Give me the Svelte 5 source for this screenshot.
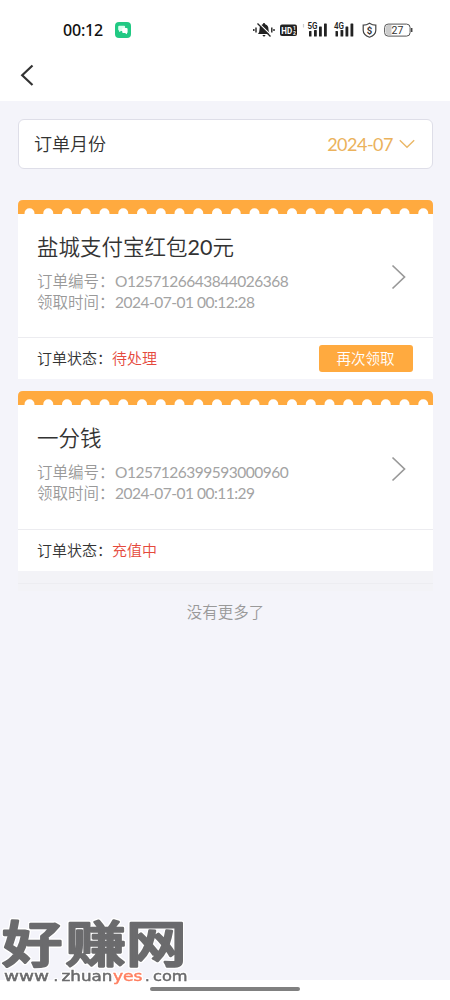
<script>
  const orders = [
    { title: ['盐城支付宝红包', '20', '元'], id: 'O1257126643844026368', time: '2024-07-01 00:12:28', status: '待处理', retry: true },
    { title: ['一分钱'], id: 'O1257126399593000960', time: '2024-07-01 00:11:29', status: '充值中', retry: false }
  ];
  const holes = Array.from({ length: 22 }, (_, i) => 11.5 + i * 18.75);
</script>

<div class="screen">
  <header>
    <div class="status">
      <span class="clock">00:12</span>
      <svg class="chat" width="16" height="16" viewBox="0 0 16 16">
        <rect width="16" height="16" rx="4" fill="#20c983" />
        <path d="M4.300 3.700h4.800q1 0 1 1v3.200q0 1-1 1H6.200L4 10V8.500q-.8-.2-.8-1V4.700q0-1 1.100-1z" fill="#d9ffef" />
        <path d="M8 6h3.400q1.200 0 1.200 1v3q0 .8-.6 1v1.300l-2-1.200H8.200q-1 0-1-1V7q0-1 .8-1z" fill="#fff" />
      </svg>
      <svg class="signals" width="162" height="20" viewBox="0 0 162 20">
        <g fill="#222">
          <path d="M5 14q1.500-1.500 1.500-4.500 0-4.500 3.300-5.300Q10 3 11 3t1.200 1.200q3.300.8 3.300 5.300 0 3 1.500 4.500zM9.500 15h3q-.4 1.500-1.500 1.500T9.500 15z" />
          <path d="M5.500 3 19 16" stroke="#fff" stroke-width="1.200" />
          <path d="M4.500 3.500 17.500 16.500M3 7.500v5M.8 9v2M18.800 7.500v5M21 9v2" stroke="#222" stroke-width="1.400" />
          <rect x="27" y="4.500" width="17" height="11.500" rx="2" />
          <text x="28.300" y="13.800" font-size="9" font-weight="700" textLength="10.800" lengthAdjust="spacingAndGlyphs" fill="#fff">HD</text>
          <text x="40" y="9.700" font-size="5" font-weight="700" fill="#fff">1</text>
          <text x="40" y="14.700" font-size="5" font-weight="700" fill="#fff">2</text>
          <text x="54.500" y="8.700" font-size="8.500" font-weight="600" textLength="10" lengthAdjust="spacingAndGlyphs">5G</text>
          <text x="81" y="8.700" font-size="8.500" font-weight="600" textLength="10" lengthAdjust="spacingAndGlyphs">4G</text>
          <path d="M50.500 4v3.500" stroke="#ccc" stroke-width="1.200" />
          {#each [56, 82.500] as x}
            <rect {x} y="11" width="2.500" height="5.500" rx=".6" />
            <rect x={x + 5} y="10" width="2.800" height="6.500" rx=".6" />
            <rect x={x + 10} y="6.500" width="2.800" height="10" rx=".6" />
            <rect x={x + 15} y="3.500" width="2.800" height="13" rx=".6" />
          {/each}
        </g>
        <path d="M116.500 3.200q3 2 6.300 2v5q0 4.600-6.300 7-6.300-2.400-6.300-7v-5q3.300 0 6.300-2z" fill="none" stroke="#444" stroke-width="1.200" />
        <text x="116.500" y="13.500" text-anchor="middle" font-size="9.500" font-weight="700" fill="#333">$</text>
        <rect x="131.600" y="4.100" width="25.500" height="12" rx="3.500" fill="#fff" stroke="#555" />
        <path d="M135 5h3.500v10H135q-2.400 0-2.400-2.500v-5Q132.600 5 135 5z" fill="#ccc" />
        <path d="M158.700 8v4" stroke="#444" stroke-width="1.500" />
        <text x="144.500" y="13.900" text-anchor="middle" font-size="10.500" fill="#333">27</text>
      </svg>
    </div>
    <svg class="back" width="16" height="24" viewBox="0 0 16 24"><path d="M14.500 2.500 4.200 12.300l10.300 9.700" fill="none" stroke="#333" stroke-width="2.200" /></svg>
  </header>

  <main>
    <div class="month">
      <span>订单月份</span>
      <span class="value"><span>2024-07</span>
        <svg width="16" height="10" viewBox="0 0 16 10"><path d="m.8 1.200 7.200 7 7.200-7" fill="none" stroke="#eab766" stroke-width="1.400" /></svg>
      </span>
    </div>

    {#each orders as order}
      <article>
        <svg class="edge" width="415" height="14" viewBox="0 0 415 14">
          <path d="M0 14V5q0-5 5-5h405q5 0 5 5v9z" fill="#ffaa3f" />
          {#each holes as x}<circle cx={x} cy="13.300" r="5" fill="#fff" />{/each}
        </svg>
        <div class="body">
          <div class="details">
            <h2>{#each order.title as part, i}<span class:num={i === 1}>{part}</span>{/each}</h2>
            <p><span>订单编号：</span><b>{order.id}</b></p>
            <p><span>领取时间：</span><b>{order.time}</b></p>
          </div>
          <svg class="next" width="16" height="26" viewBox="0 0 16 26"><path d="m1.500 1.500 12 11.500-12 11.500" fill="none" stroke="#999" stroke-width="1.700" /></svg>
        </div>
        <footer>
          <span>订单状态：</span><em>{order.status}</em>
          {#if order.retry}<button>再次领取</button>{/if}
        </footer>
      </article>
    {/each}
    <div class="end"></div>
    <p class="more">没有更多了</p>
  </main>
  <div class="nav"><i></i></div>

  <svg class="mark" width="200" height="80" viewBox="0 0 200 80">
    <g transform="translate(0 52.300) scale(1.140 .92)">
      <text class="han" x="1.800 57.500 110.500" y="0" font-size="53">好赚网</text>
    </g>
    <g class="url" font-size="14.500">
      <text x="4" y="71" textLength="45" lengthAdjust="spacingAndGlyphs">www</text>
      <text x="53.500" y="71">.</text>
      <text x="61.500" y="71" textLength="51" lengthAdjust="spacingAndGlyphs">zhuan</text>
      <text class="accent" x="113" y="71" textLength="29.500" lengthAdjust="spacingAndGlyphs">yes</text>
      <text x="145" y="71">.</text>
      <text x="153" y="71" textLength="34.500" lengthAdjust="spacingAndGlyphs">com</text>
    </g>
  </svg>
</div>

<style>
  :global(body) { margin: 0; }
  .screen { position: relative; display: flex; flex-direction: column; width: 450px; height: 1000px; overflow: hidden; background: #f4f4fa; color: #333; font-family: Lato, "Noto Sans CJK SC", sans-serif; font-weight: 350; }
  header { height: 101px; flex: none; background: #fff; }
  .status { display: flex; height: 60px; align-items: center; padding-left: 63px; }
  .clock { width: 52px; color: #111; font: 500 16px/20px "Noto Sans", sans-serif; letter-spacing: -.2px; }
  .signals { margin-left: 122px; font-family: Roboto, sans-serif; font-weight: 400; }
  .back { display: block; margin: 3px 0 0 18px; }
  main { flex: 1; padding: 18px 17px 0 18px; }
  .month { box-sizing: border-box; display: flex; height: 50px; align-items: center; justify-content: space-between; padding: 0 17px 2px 15px; margin-bottom: 31px; border: 1px solid #dedee8; border-radius: 6px; background: #fff; font-size: 18px; }
  .value { display: flex; align-items: center; gap: 6px; color: #ebb25c; font-weight: 400; letter-spacing: -.5px; }
  .value span { padding-top: 1px; }
  .value svg { margin-top: 2px; }
  article { height: 179px; margin: 0 0 11.500px -.5px; width: 415px; background: linear-gradient(#f4f4fa 7px, #fff 7px); }
  article + article { height: 180px; }
  .edge { display: block; }
  .body { box-sizing: border-box; display: flex; height: 123px; justify-content: space-between; padding: 18px 26px 0 19.500px; }
  article + article .body { height: 124.500px; }
  h2 { margin: 0 0 9px; font-size: 21.500px; line-height: 30px; font-weight: 350; }
  .num { font-weight: 400; }
  .details p { display: flex; height: 21px; margin: 0; line-height: 21px; color: #999; font-size: 15.500px; }
  .details p span { width: 78px; white-space: nowrap; }
  .details b { color: #a3a3a3; font-weight: 400; font-size: 15.500px; letter-spacing: -.5px; }
  .next { margin-top: 32px; }
  article + article .next { margin-top: 33px; }
  footer { box-sizing: border-box; display: flex; height: 42px; align-items: center; padding: 0 20px 2px 19.500px; border-top: 1px solid #ececf0; font-size: 15px; }
  footer span { width: 75px; }
  em { font-style: normal; color: #e5493c; }
  button { width: 94px; height: 27px; padding: 0 0 1px; margin: 2px 0 0 auto; border: 0; border-radius: 3px; background: #ffaa3f; color: #fff; font: 350 14.500px/24px "Noto Sans CJK SC", sans-serif; }
  .end { height: 20px; margin-top: -11.500px; background: linear-gradient(#f3f3f7 12px, #ededf1 12px, #ededf1 13px, #f3f3f7 13px); }
  .more { margin: 9px 0 0; text-align: center; color: #999; font-size: 15.500px; line-height: 24px; }
  .nav { height: 20px; flex: none; background: #fff; display: flex; justify-content: center; }
  .nav i { width: 150px; height: 4px; margin-top: 7px; border-radius: 2px; background: #808080; }
  .mark { position: absolute; left: 0; top: 910px; fill: #6b6b6d; stroke: #6b6b6d; filter: drop-shadow(1px 0 0 #fff) drop-shadow(-1px 0 0 #fff) drop-shadow(0 1px 0 #fff) drop-shadow(0 -1px 0 #fff); }
  .han { font-family: "Noto Sans CJK SC", sans-serif; font-weight: 500; stroke-width: 2.500px; stroke-linejoin: round; }
  .url { font-family: "DejaVu Sans", sans-serif; font-weight: 400; stroke-width: .5px; }
  .accent { fill: #ff7f60; stroke: #ff7f60; }
</style>
